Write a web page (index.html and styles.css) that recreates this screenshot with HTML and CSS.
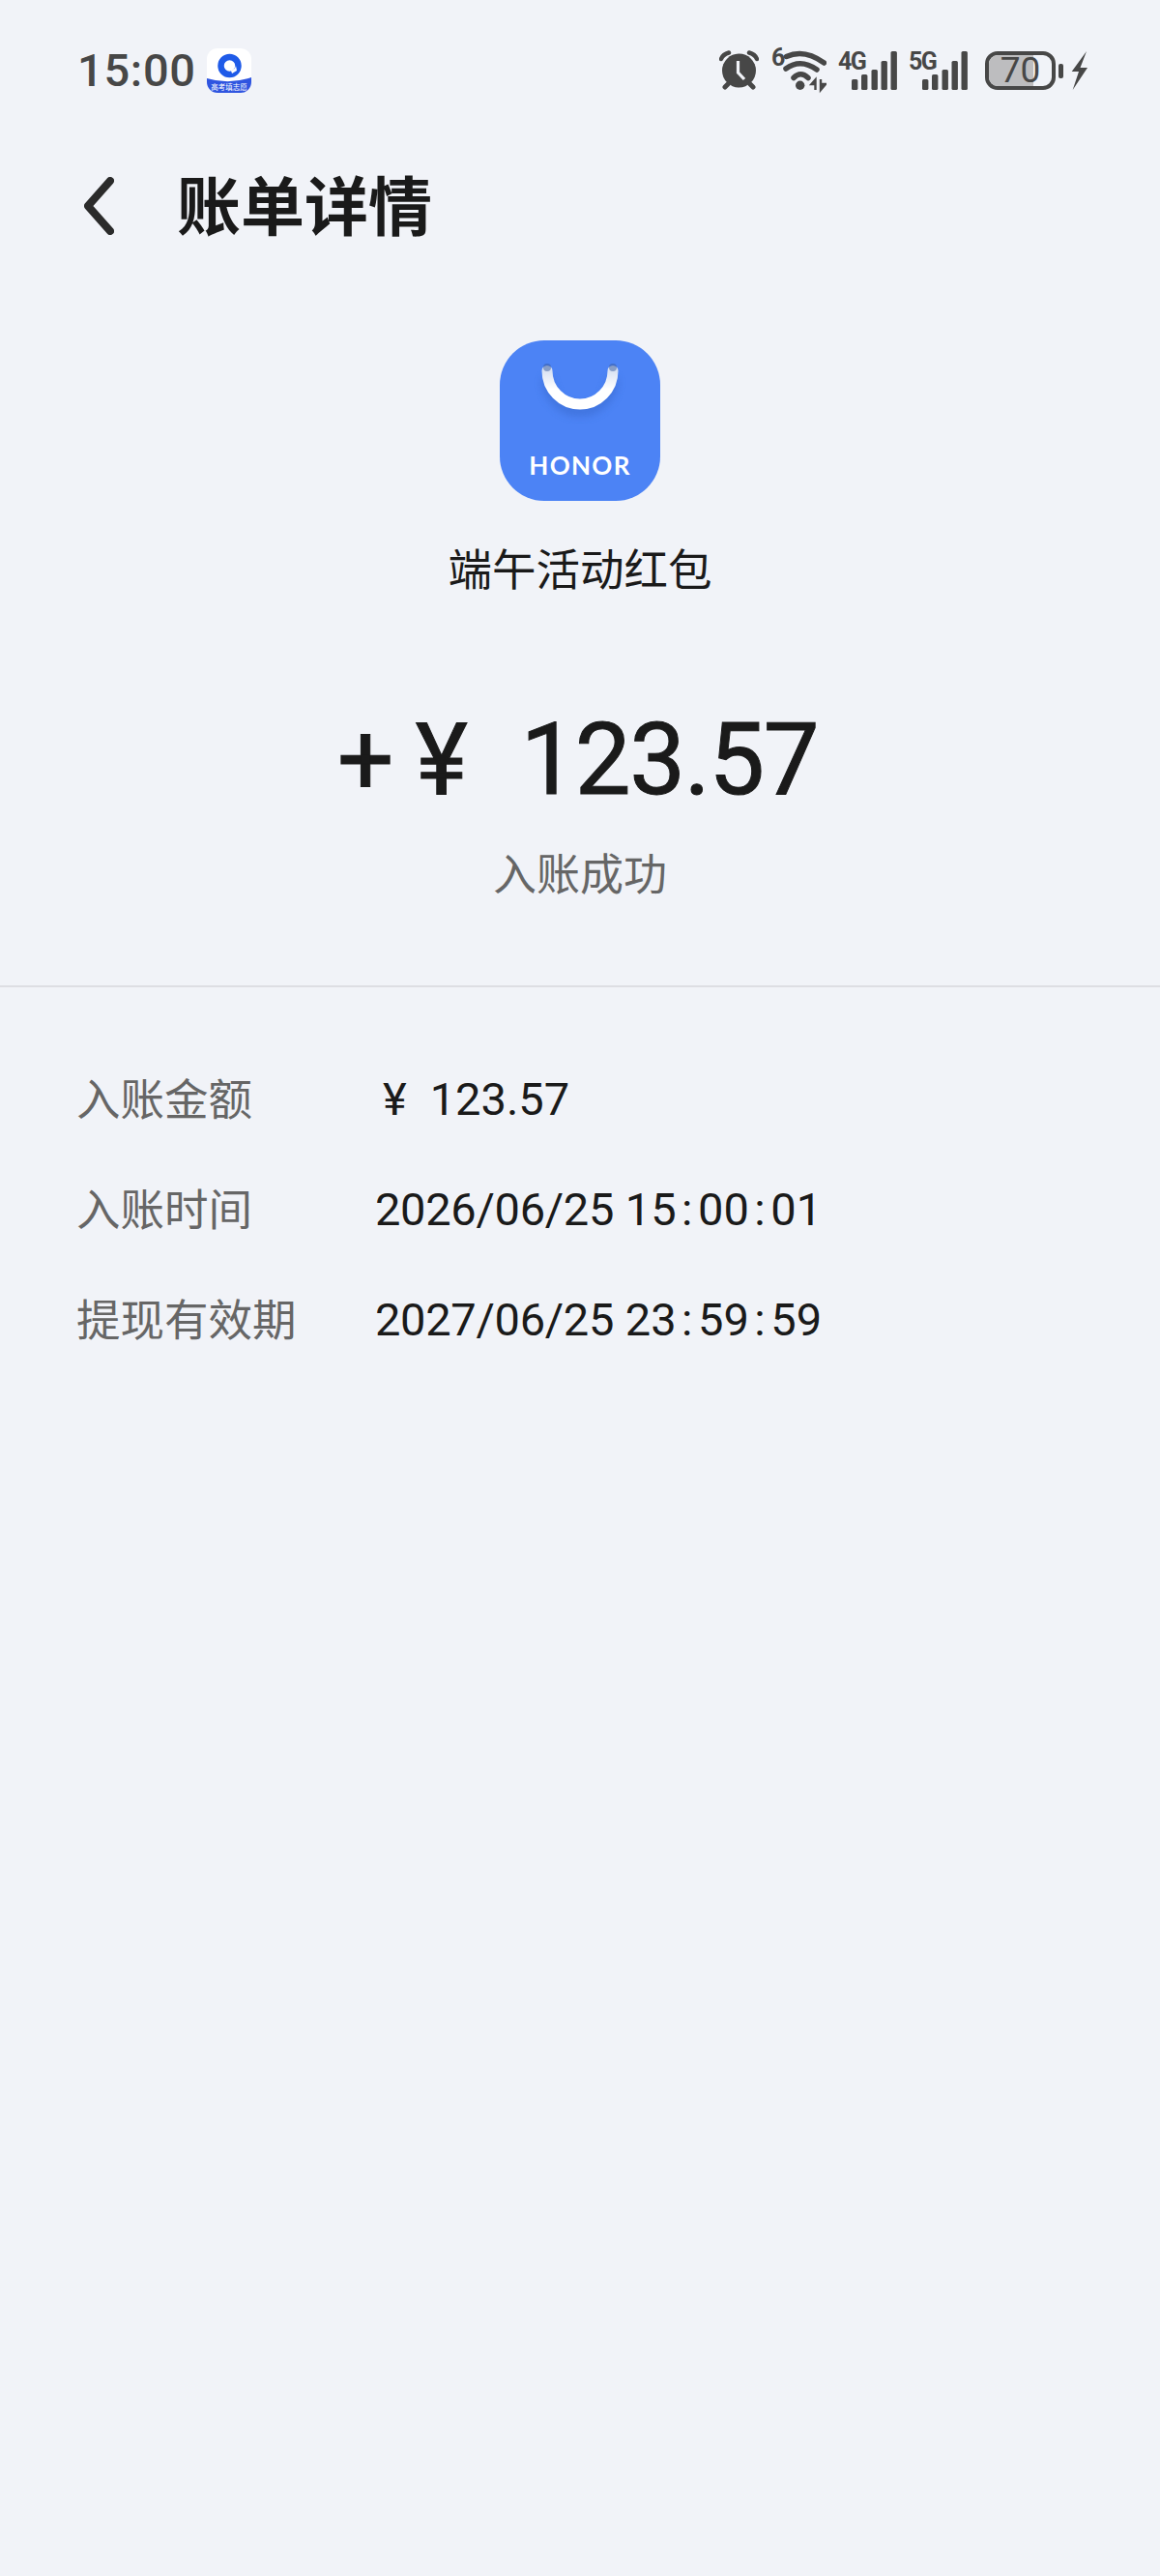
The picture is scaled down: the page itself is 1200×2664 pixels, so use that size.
FILE: index.html
```html
<!DOCTYPE html>
<html lang="zh-CN">
<head>
    <meta charset="UTF-8">
    <meta name="viewport" content="width=device-width, initial-scale=1.0">
    <title>账单详情</title>
    <link rel="stylesheet" href="styles.css">
</head>
<body>
    <div class="status-bar">
        <div class="status-left">
            <span class="clock">15:00</span>
            <svg class="app-badge" width="46" height="46" viewBox="0 0 46 46">
                <rect width="46" height="46" rx="11" fill="#fff"/>
                <path d="M0 31 Q23 38 46 30 V35 A11 11 0 0 1 35 46 H11 A11 11 0 0 1 0 35Z" fill="#2f55e0"/>
                <circle cx="23.5" cy="18" r="9" fill="none" stroke="#1f5be8" stroke-width="6.5"/>
                <path d="M25 23 Q29 22 30 18 L31 23 L26 26Z" fill="#fff"/>
                <text x="23" y="43" text-anchor="middle" class="badge-text">高考填志愿</text>
            </svg>
        </div>
        <div class="status-right">
            <!-- 闹钟 -->
            <svg class="st-icon" width="41" height="52" viewBox="0 -6 41 52">
                <path d="M2 8 Q4 3 10 1.5" fill="none" stroke="#474747" stroke-width="4.5" stroke-linecap="round"/>
                <path d="M39 8 Q37 3 31 1.5" fill="none" stroke="#474747" stroke-width="4.5" stroke-linecap="round"/>
                <circle cx="20.5" cy="20" r="17.5" fill="#474747"/>
                <path d="M6 37 L9 34 M35 37 L32 34" stroke="#474747" stroke-width="5" stroke-linecap="round"/>
                <path d="M19.5 10 V22 L26 29" fill="none" stroke="#f1f3f8" stroke-width="3.2"/>
            </svg>
            <!-- wifi -->
            <svg class="st-icon wifi" width="57" height="58" viewBox="0 -9 57 58">
                <text x="0" y="15" class="net-text">6</text>
                <path d="M15.5 5.5 Q34 -3 54.5 12" fill="none" stroke="#474747" stroke-width="5.5" stroke-linecap="round"/>
                <path d="M15 18 Q30 7 47 19" fill="none" stroke="#474747" stroke-width="5.5" stroke-linecap="round"/>
                <path d="M23 27.5 Q30 20 38 27.5" fill="none" stroke="#474747" stroke-width="5.5" stroke-linecap="round"/>
                <circle cx="29.7" cy="35.3" r="4.7" fill="#474747"/>
                <path d="M45.5 40 V29.5 L41.5 34 H45.5 M51 29 V40 L56 34 H51" fill="#474747" stroke="#474747" stroke-width="2.4"/>
            </svg>
            <!-- 4G -->
            <svg class="st-icon signal" width="61" height="52" viewBox="0 -6 61 52">
                <text x="0" y="19" class="net-text net-small">4G</text>
                <rect x="14" y="29" width="6.4" height="11" rx="1.6"/>
                <rect x="24" y="24" width="6.4" height="16" rx="1.6"/>
                <rect x="34.5" y="19" width="6.4" height="21" rx="1.6"/>
                <rect x="44.5" y="10" width="6.4" height="30" rx="1.6"/>
                <rect x="54.5" y="0" width="6.4" height="40" rx="1.6"/>
            </svg>
            <!-- 5G -->
            <svg class="st-icon signal" width="61" height="52" viewBox="0 -6 61 52">
                <text x="0" y="19" class="net-text net-small">5G</text>
                <rect x="14" y="29" width="6.4" height="11" rx="1.6"/>
                <rect x="24" y="24" width="6.4" height="16" rx="1.6"/>
                <rect x="34.5" y="19" width="6.4" height="21" rx="1.6"/>
                <rect x="44.5" y="10" width="6.4" height="30" rx="1.6"/>
                <rect x="54.5" y="0" width="6.4" height="40" rx="1.6"/>
            </svg>
            <!-- 电量 -->
            <div class="battery">
                <div class="battery-body">
                    <div class="battery-fill"></div>
                    <span class="battery-num">70</span>
                </div>
                <div class="battery-knob"></div>
            </div>
            <svg class="bolt" width="18" height="40" viewBox="0 0 18 40">
                <path d="M16 0 L0.7 21 H8 L1.7 40 L17 17 H9.5 Z" fill="#474747"/>
            </svg>
        </div>
    </div>

    <div class="nav">
        <svg class="back" width="31" height="60" viewBox="0 0 31 60">
            <path d="M27 4 L4 30 L27 56" fill="none" stroke="#2b2b2b" stroke-width="8" stroke-linecap="round" stroke-linejoin="round"/>
        </svg>
        <h1 class="title">账单详情</h1>
    </div>

    <div class="summary">
        <svg class="shop-icon" width="166" height="166" viewBox="0 0 166 166">
            <defs>
                <linearGradient id="handleGrad" x1="0" y1="0" x2="0" y2="1">
                    <stop offset="0" stop-color="#d9e2f3"/>
                    <stop offset="0.55" stop-color="#fff"/>
                </linearGradient>
                <filter id="softShadow" x="-30%" y="-30%" width="160%" height="170%">
                    <feGaussianBlur stdDeviation="4"/>
                </filter>
            </defs>
            <rect width="166" height="166" rx="46" fill="#4c83f5"/>
            <path d="M49 32 A34 34 0 0 0 117 32" fill="none" stroke="#2f5dbb" stroke-width="11" transform="translate(0,7)" opacity="0.4" filter="url(#softShadow)"/>
            <path d="M49 31.5 A34 34.5 0 0 0 117 31.5" fill="none" stroke="url(#handleGrad)" stroke-width="11" stroke-linecap="round"/>
            <circle cx="49" cy="28" r="4" fill="#37599c" opacity="0.5"/>
            <circle cx="117" cy="28" r="4" fill="#37599c" opacity="0.5"/>
            <text x="83" y="139" text-anchor="middle" class="shop-text">HONOR</text>
        </svg>
        <div class="item-name">端午活动红包</div>
        <div class="amount"><span class="sign">+</span><span class="yen">¥</span><span>123.57</span></div>
        <div class="state">入账成功</div>
    </div>

    <div class="details">
        <div class="label">入账金额</div>
        <div class="value"><span class="small-yen">¥</span>123.57</div>
        <div class="label">入账时间</div>
        <div class="value"><span class="date">2026/06/25</span> 15<span class="colon">:</span>00<span class="colon">:</span>01</div>
        <div class="label">提现有效期</div>
        <div class="value"><span class="date">2027/06/25</span> 23<span class="colon">:</span>59<span class="colon">:</span>59</div>
    </div>
</body>
</html>
```

FILE: styles.css
```css
body {
    display: flow-root;
    margin: 0;
    padding: 0;
    width: 1200px;
    min-height: 2664px;
    background-color: #f1f3f8;
    font-family: Roboto, "Noto Sans CJK SC", sans-serif;
    color: #1a1a1a;
}

.status-bar {
    display: flex;
    justify-content: space-between;
    align-items: center;
    height: 58px;
    margin-top: 44px;
    padding: 0 74px 0 80px;
}

.status-left {
    display: flex;
    align-items: center;
    gap: 11px;
}

.clock {
    font-size: 47px;
    font-weight: 500;
    letter-spacing: 0.7px;
    color: #474747;
    line-height: 48px;
}

.badge-text {
    font-family: "Noto Sans CJK SC", sans-serif;
    font-size: 7.5px;
    fill: #fff;
}

.status-right {
    display: flex;
    align-items: center;
    gap: 12px;
}

.wifi {
    margin-left: 1px;
}

.net-text {
    font-family: Roboto, sans-serif;
    font-size: 25px;
    font-weight: 700;
    fill: #474747;
}

.net-small {
    letter-spacing: -1.5px;
}

.signal rect {
    fill: #474747;
}

.battery {
    display: flex;
    align-items: center;
    gap: 3px;
    margin-left: 6px;
}

.battery-body {
    position: relative;
    box-sizing: border-box;
    width: 73px;
    height: 40px;
    border: 4px solid #474747;
    border-radius: 13px;
    display: flex;
    align-items: center;
    justify-content: center;
}

.battery-fill {
    position: absolute;
    left: 0;
    top: 0;
    bottom: 0;
    width: 70%;
    border-radius: 9px 0 0 9px;
    background-color: #bdbdbf;
}

.battery-num {
    position: relative;
    font-size: 37px;
    color: #474747;
    line-height: 32px;
}

.battery-knob {
    width: 5px;
    height: 15px;
    border-radius: 2px;
    background-color: #474747;
}

.bolt {
    margin-left: -4px;
}

.nav {
    display: flex;
    align-items: center;
    height: 100px;
    margin-top: 61px;
    padding-left: 87px;
    gap: 65px;
}

.title {
    margin: 0 0 7px;
    font-size: 66px;
    font-weight: 700;
    line-height: 93px;
    font-family: "Noto Sans CJK SC", sans-serif;
}

.summary {
    display: flex;
    flex-direction: column;
    align-items: center;
    padding-top: 89px;
    padding-bottom: 87px;
    border-bottom: 2px solid #dddee3;
}

.item-name {
    margin-top: 38px;
    font-size: 45.5px;
    line-height: 60px;
    font-family: "Noto Sans CJK SC", sans-serif;
}

.shop-text {
    font-family: Lato, sans-serif;
    font-size: 26px;
    font-weight: 700;
    letter-spacing: 1.3px;
    fill: #fff;
}

.amount {
    margin-top: 110px;
    margin-right: 5px;
    font-size: 103px;
    font-weight: 400;
    -webkit-text-stroke: 1px #1a1a1a;
    line-height: 120px;
    letter-spacing: -1.5px;
    white-space: pre;
}

.sign {
    margin-right: 24px;
}

.yen {
    margin-right: 56px;
}

.state {
    margin-top: 26px;
    font-size: 45px;
    line-height: 60px;
    color: #666;
    font-family: "Noto Sans CJK SC", sans-serif;
}

.details {
    display: grid;
    grid-template-columns: 309px 1fr;
    row-gap: 51px;
    padding: 83px 0 0 79px;
}

.label {
    font-size: 45.5px;
    line-height: 60px;
    color: #666;
    font-family: "Noto Sans CJK SC", sans-serif;
}

.value {
    padding-top: 3px;
    font-size: 47px;
    line-height: 60px;
    white-space: pre;
}

.date {
    letter-spacing: -0.3px;
}

.colon {
    margin: 0 5.5px;
}

.small-yen {
    margin: 0 24px 0 8px;
}
```
